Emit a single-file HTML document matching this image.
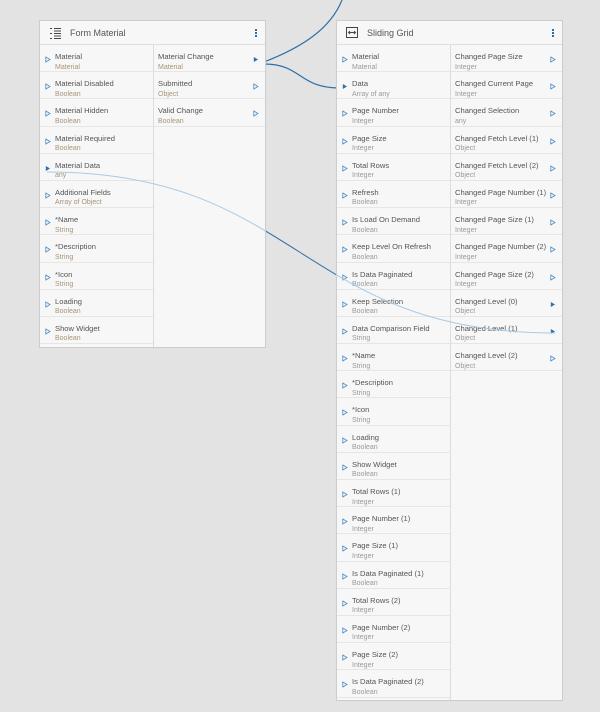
<!DOCTYPE html>
<html><head><meta charset="utf-8"><style>
*{box-sizing:border-box;margin:0;padding:0}
body{width:600px;height:712px;background:#e3e3e3;position:relative;overflow:hidden;font-family:"Liberation Sans",sans-serif}
.card{position:absolute;background:#f7f7f7;border:1px solid #cdcdcd;box-shadow:0 0 1px rgba(0,0,0,.05)}
.hd{height:24px;border-bottom:1px solid #dedede;position:relative}
.hd .t{position:absolute;left:30px;top:7px;font-size:9px;color:#555}
.hd .m{position:absolute;right:8px;top:8px;width:2px;height:8px;background:linear-gradient(#2f6fa8 0 2px,transparent 2px 3px,#2f6fa8 3px 5px,transparent 5px 6px,#2f6fa8 6px 8px)}
.col{position:absolute;top:24px;bottom:0;width:114px}
.col.l{left:0;border-right:1px solid #dcdcdc}
.col.r{left:114px;right:0;width:auto}
.row{height:27.2px;border-bottom:1px solid #e6e6e6;position:relative}
.row .n{position:absolute;top:7px;font-size:7.6px;color:#555;white-space:nowrap}
.row .ty{position:absolute;top:18.5px;font-size:7px;color:#9a9a9a;white-space:nowrap}
.l .n,.l .ty{left:15px}
.r .n,.r .ty{left:4px}
.warm .ty{color:#a89478}
.ar{position:absolute;top:11px;width:6px;height:7px}
.l .ar{left:5px}
.r .ar{right:6px}
</style></head><body>
<svg width="600" height="712" style="position:absolute;left:0;top:0">
<path d="M264,62 C300,48 330,30 342,0" stroke="#2f6fa8" stroke-width="1.2" fill="none"/>
<path d="M264,64 C302,64 298,88 340,88" stroke="#2f6fa8" stroke-width="1.2" fill="none"/>
<path d="M47,172 C300,172 300,333 555,333" stroke="#2f6fa8" stroke-width="1" fill="none"/>
</svg>

<div class="card" style="left:39px;top:20px;width:227px;height:328px">
<div class="hd">
<svg style="position:absolute;left:10px;top:6px" width="12" height="12" viewBox="0 0 12 12"><g stroke="#444" stroke-width="1"><path d="M4 1.5H11M4 4H11M4 6.5H11M4 9H11M4 11.5H11M0 1.5H2M0 6.5H2M0 11.5H2"/></g></svg>
<span class="t">Form Material</span><span class="m"></span></div>
<div class="col l warm" id="fl"></div>
<div class="col r warm" id="fr"></div>
</div>

<div class="card" style="left:336px;top:20px;width:227px;height:681px">
<div class="hd">
<svg style="position:absolute;left:9px;top:6px" width="12" height="11" viewBox="0 0 12 11"><rect x="0.5" y="0.5" width="11" height="10" fill="none" stroke="#444"/><path d="M2.5 5.5H9.5M4 4L2.5 5.5L4 7M8 4L9.5 5.5L8 7" stroke="#444" fill="none" stroke-width="0.9"/></svg>
<span class="t">Sliding Grid</span><span class="m"></span></div>
<div class="col l" id="sl"></div>
<div class="col r" id="sr"></div>
</div>

<svg width="600" height="712" style="position:absolute;left:0;top:0;pointer-events:none">
<defs><clipPath id="c"><rect x="39" y="20" width="227" height="328"/><rect x="336" y="20" width="227" height="681"/></clipPath></defs>
<path clip-path="url(#c)" d="M47,172 C300,172 300,333 555,333" stroke="#a9cbe6" stroke-width="1" fill="none"/>
</svg>

<script>
function fill(id,rows){var h='';rows.forEach(function(r){var f=r[2];h+='<div class="row"><span class="n">'+r[0]+'</span><span class="ty">'+r[1]+'</span><svg class="ar" viewBox="0 0 6 7"><path d="M0.8 1L5 3.5L0.8 6Z" fill="'+(f?'#2f6fa8':'none')+'" stroke="#4a8cc4" stroke-width="'+(f?0:0.8)+'"/></svg></div>'});document.getElementById(id).innerHTML=h;}
fill('fl',[["Material","Material"],["Material Disabled","Boolean"],["Material Hidden","Boolean"],["Material Required","Boolean"],["Material Data","any",1],["Additional Fields","Array of Object"],["*Name","String"],["*Description","String"],["*Icon","String"],["Loading","Boolean"],["Show Widget","Boolean"]]);
fill('fr',[["Material Change","Material",1],["Submitted","Object"],["Valid Change","Boolean"]]);
fill('sl',[["Material","Material"],["Data","Array of any",1],["Page Number","Integer"],["Page Size","Integer"],["Total Rows","Integer"],["Refresh","Boolean"],["Is Load On Demand","Boolean"],["Keep Level On Refresh","Boolean"],["Is Data Paginated","Boolean"],["Keep Selection","Boolean"],["Data Comparison Field","String"],["*Name","String"],["*Description","String"],["*Icon","String"],["Loading","Boolean"],["Show Widget","Boolean"],["Total Rows (1)","Integer"],["Page Number (1)","Integer"],["Page Size (1)","Integer"],["Is Data Paginated (1)","Boolean"],["Total Rows (2)","Integer"],["Page Number (2)","Integer"],["Page Size (2)","Integer"],["Is Data Paginated (2)","Boolean"]]);
fill('sr',[["Changed Page Size","Integer"],["Changed Current Page","Integer"],["Changed Selection","any"],["Changed Fetch Level (1)","Object"],["Changed Fetch Level (2)","Object"],["Changed Page Number (1)","Integer"],["Changed Page Size (1)","Integer"],["Changed Page Number (2)","Integer"],["Changed Page Size (2)","Integer"],["Changed Level (0)","Object",1],["Changed Level (1)","Object",1],["Changed Level (2)","Object"]]);
</script>
</body></html>
